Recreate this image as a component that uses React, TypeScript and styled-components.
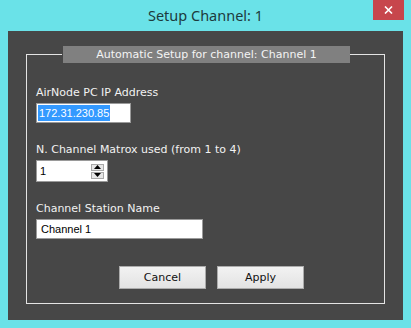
import React from 'react';
import styled, { createGlobalStyle } from 'styled-components';

const GlobalStyle = createGlobalStyle`
  html, body {
    margin: 0;
    padding: 0;
    background: #6ae2e8;
  }
`;

const Window = styled.div`
  width: 411px;
  height: 328px;
  background: #6ae2e8;
  display: flex;
  flex-direction: column;
  box-sizing: border-box;
  padding: 0 8px 8px 8px;
  font-family: "DejaVu Sans", Verdana, sans-serif;
`;

const TitleBar = styled.div`
  height: 31px;
  position: relative;
  display: flex;
  align-items: center;
  justify-content: center;
`;

const Title = styled.div`
  font-family: "Noto Sans", "Open Sans", sans-serif;
  font-size: 14.5px;
  color: #1d3a3d;
  margin-top: -2px;
`;

const CloseButton = styled.div`
  position: absolute;
  top: 0;
  right: -1px;
  width: 31px;
  height: 20px;
  background: #c7464c;
  display: flex;
  align-items: center;
  justify-content: center;
`;

const Content = styled.div`
  flex: 1;
  background: #474747;
  display: flex;
  flex-direction: column;
  padding: 15px 18px 16px 18px;
`;

const Group = styled.fieldset`
  flex: 1;
  margin: 0;
  border: 1px solid #e4e4e4;
  padding: 23px 9px 0 9px;
  display: flex;
  flex-direction: column;
  gap: 20px;
`;

const Legend = styled.legend`
  width: 287px;
  height: 17px;
  box-sizing: border-box;
  margin: 0 auto;
  padding: 0;
  background: #808080;
  color: #f4f4f4;
  font-size: 11px;
  line-height: 17px;
  text-align: center;
  position: relative;
  left: 1px;
`;

const Field = styled.div`
  display: flex;
  flex-direction: column;
  gap: 3px;
  align-items: flex-start;
`;

const Label = styled.div`
  color: #f2f2f2;
  font-size: 11px;
  line-height: 14px;
`;

const TextBox = styled.div<{ $width: number }>`
  width: ${({ $width }) => $width}px;
  height: 20px;
  box-sizing: border-box;
  background: #ffffff;
  border: 1px solid #9a9a9a;
  display: flex;
  align-items: center;
  padding-left: 1px;
  font-family: "Liberation Sans", Arial, sans-serif;
  font-size: 11px;
  color: #000;
`;

const Selected = styled.span`
  background: #3399ff;
  color: #ffffff;
  line-height: 16px;
  padding: 0 1px;
`;

const Spinner = styled(TextBox)`
  height: 22px;
  justify-content: space-between;
  padding: 0 3px 0 3px;
`;

const SpinButtons = styled.div`
  display: flex;
  flex-direction: column;
  gap: 1px;
`;

const SpinButton = styled.div`
  width: 13px;
  height: 7px;
  box-sizing: border-box;
  border: 1px solid #a8a8a8;
  background: #e6e6e6;
  display: flex;
  align-items: center;
  justify-content: center;
`;

const ButtonRow = styled.div`
  display: flex;
  gap: 11px;
  margin-top: 7px;
  margin-left: 83px;
`;

const Button = styled.button`
  width: 87px;
  height: 23px;
  box-sizing: border-box;
  border: 1px solid #acacac;
  background: linear-gradient(#f2f2f2, #e3e3e3);
  font-family: "DejaVu Sans", Verdana, sans-serif;
  font-size: 11px;
  color: #111;
  padding: 0;
`;

const Triangle = ({ up }: { up?: boolean }) => (
  <svg width="7" height="4" viewBox="0 0 7 4">
    <path d={up ? 'M0 4 L3.5 0 L7 4 Z' : 'M0 0 L3.5 4 L7 0 Z'} fill="#000" />
  </svg>
);

export default function App() {
  return (
    <>
      <GlobalStyle />
      <Window>
        <TitleBar>
          <Title>Setup Channel: 1</Title>
          <CloseButton>
            <svg width="9" height="8" viewBox="0 0 9 8">
              <path d="M1 0.5 L8 7.5 M8 0.5 L1 7.5" stroke="#fff" strokeWidth="1.6" />
            </svg>
          </CloseButton>
        </TitleBar>
        <Content>
          <Group>
            <Legend>Automatic Setup for channel: Channel 1</Legend>
            <Field>
              <Label>AirNode PC IP Address</Label>
              <TextBox $width={95}>
                <Selected>172.31.230.85</Selected>
              </TextBox>
            </Field>
            <Field>
              <Label>N. Channel Matrox used (from 1 to 4)</Label>
              <Spinner $width={72}>
                <span>1</span>
                <SpinButtons>
                  <SpinButton><Triangle up /></SpinButton>
                  <SpinButton><Triangle /></SpinButton>
                </SpinButtons>
              </Spinner>
            </Field>
            <Field>
              <Label>Channel Station Name</Label>
              <TextBox $width={167}>&nbsp;Channel 1</TextBox>
            </Field>
            <ButtonRow>
              <Button>Cancel</Button>
              <Button>Apply</Button>
            </ButtonRow>
          </Group>
        </Content>
      </Window>
    </>
  );
}
